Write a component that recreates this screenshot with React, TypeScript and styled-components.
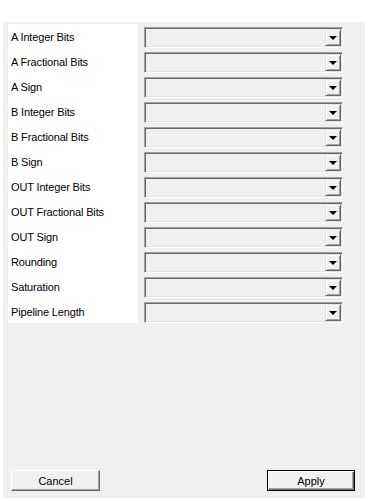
import React from "react";
import styled, { createGlobalStyle } from "styled-components";

const Global = createGlobalStyle`
  html, body { margin: 0; padding: 0; background: #ffffff; }
  body { font-family: Tahoma, "Liberation Sans", Arial, sans-serif; font-size: 11px; color: #000; }
`;

const Panel = styled.div`
  box-sizing: border-box;
  margin: 22px 0 0 3px;
  width: 362px;
  height: 476px;
  background: #f0f0f0;
  padding: 2px 0 7px 5px;
  display: flex;
  flex-direction: column;
`;

const Form = styled.div`
  display: grid;
  grid-template-columns: 130px 199px;
  column-gap: 6px;
  align-items: start;
`;

const LabelColumn = styled.div`
  box-sizing: border-box;
  background: #ffffff;
  height: 299px;
  padding: 3px 0 0 3px;
  display: flex;
  flex-direction: column;
  gap: 5px;
`;

const Label = styled.div`
  height: 20px;
  line-height: 20px;
  font-family: "Liberation Sans", Arial, sans-serif;
  font-size: 11px;
  letter-spacing: -0.15px;
  white-space: nowrap;
`;

const ComboColumn = styled.div`
  padding-top: 3px;
  display: flex;
  flex-direction: column;
  gap: 4px;
`;

const Combo = styled.div`
  box-sizing: border-box;
  height: 21px;
  border: 1px solid;
  border-color: #a0a0a0 #ffffff #ffffff #a0a0a0;
  box-shadow: inset 1px 1px 0 #696969, inset -1px -1px 0 #e3e3e3;
  background: #f0f0f0;
  display: flex;
  justify-content: flex-end;
  padding: 1px;
`;

const ArrowButton = styled.div`
  box-sizing: border-box;
  width: 16px;
  height: 17px;
  border: 1px solid;
  border-color: #e3e3e3 #696969 #696969 #e3e3e3;
  box-shadow: inset 1px 1px 0 #ffffff, inset -1px -1px 0 #a0a0a0;
  background: #f0f0f0;
  display: flex;
  align-items: center;
  justify-content: center;
`;

const Triangle = styled.div`
  width: 0;
  height: 0;
  border-left: 4px solid transparent;
  border-right: 4px solid transparent;
  border-top: 4px solid #000;
  margin-top: 1px;
`;

const Spacer = styled.div`
  flex: 1;
`;

const ButtonRow = styled.div`
  display: flex;
  justify-content: space-between;
  padding: 0 10px 0 3px;
`;

const Button = styled.div<{ $default?: boolean; $width: number }>`
  box-sizing: border-box;
  width: ${(p) => p.$width}px;
  height: 21px;
  display: flex;
  align-items: center;
  justify-content: center;
  font-family: "Liberation Sans", Arial, sans-serif;
  font-size: 11px;
  background: #f0f0f0;
  border: 1px solid;
  border-color: ${(p) =>
    p.$default ? "#000000" : "#ffffff #696969 #696969 #ffffff"};
  box-shadow: ${(p) =>
    p.$default
      ? "inset 1px 1px 0 #ffffff, inset -1px -1px 0 #696969, inset -2px -2px 0 #a0a0a0"
      : "inset -1px -1px 0 #a0a0a0"};
`;

const labels = [
  "A Integer Bits",
  "A Fractional Bits",
  "A Sign",
  "B Integer Bits",
  "B Fractional Bits",
  "B Sign",
  "OUT Integer Bits",
  "OUT Fractional Bits",
  "OUT Sign",
  "Rounding",
  "Saturation",
  "Pipeline Length",
];

export default function App() {
  return (
    <>
      <Global />
      <Panel>
        <Form>
          <LabelColumn>
            {labels.map((l) => (
              <Label key={l}>{l}</Label>
            ))}
          </LabelColumn>
          <ComboColumn>
            {labels.map((l) => (
              <Combo key={l}>
                <ArrowButton>
                  <Triangle />
                </ArrowButton>
              </Combo>
            ))}
          </ComboColumn>
        </Form>
        <Spacer />
        <ButtonRow>
          <Button $width={89}>Cancel</Button>
          <Button $width={88} $default>
            Apply
          </Button>
        </ButtonRow>
      </Panel>
    </>
  );
}
